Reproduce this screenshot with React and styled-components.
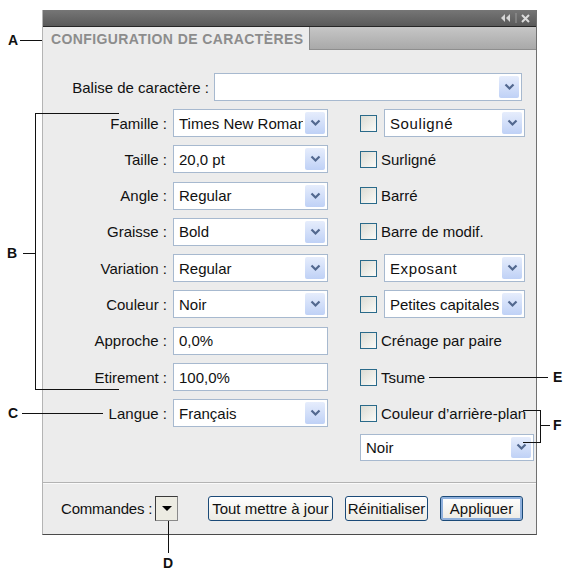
import React from "react";
import styled, { createGlobalStyle } from "styled-components";

const GlobalStyle = createGlobalStyle`
	body {
		margin: 0;
		background: #ffffff;
		font-family: "Liberation Sans", Arial, sans-serif;
	}
`;

const Page = styled.div`
	position: relative;
	width: 564px;
	height: 570px;
	box-sizing: border-box;
	padding: 10px 0 0 42px;
	overflow: hidden;
`;

const Panel = styled.div`
	width: 495px;
	height: 525px;
	box-sizing: border-box;
	display: flex;
	flex-direction: column;
	background: #ececec;
	border-left: 1px solid #b4b4b4;
	border-right: 1px solid #707070;
	border-bottom: 1px solid #4a4a4a;
`;

const TitleBar = styled.div`
	height: 17px;
	box-sizing: border-box;
	display: flex;
	align-items: center;
	justify-content: flex-end;
	padding-right: 4px;
	background: linear-gradient(#767676, #595959);
	border-bottom: 1px solid #262626;
`;

const TabBar = styled.div`
	height: 23px;
	box-sizing: border-box;
	display: flex;
	background: linear-gradient(#c6c6c6, #a9a9a9);
	border-bottom: 1px solid #8e8e8e;
`;

const Tab = styled.div`
	display: flex;
	align-items: center;
	padding: 0 6px 0 8px;
	margin-bottom: -1px;
	background: #ececec;
	border-right: 1px solid #8a8a8a;
	color: #8c8c8c;
	font-size: 14px;
	font-weight: bold;
	letter-spacing: 0.4px;
	white-space: nowrap;
`;

const Body = styled.div`
	flex: 1;
	display: flex;
	flex-direction: column;
	padding: 23px 5px 0 0;
`;

const WideRow = styled.div`
	display: flex;
	align-items: center;
	gap: 5px;
	height: 28px;
	padding-right: 9px;
	margin-bottom: 8px;
`;

const Label = styled.span`
	width: ${(p) => p.$width || 124}px;
	flex: none;
	text-align: right;
	font-size: 15px;
	color: #111;
	white-space: nowrap;
`;

const FieldGrid = styled.div`
	display: grid;
	grid-template-columns: 124px 155px 1fr;
	grid-auto-rows: 28px;
	column-gap: 6px;
	row-gap: 8.3px;
	align-items: center;
`;

const Field = styled.div`
	height: ${(p) => p.$height || 28}px;
	width: ${(p) => (p.$width ? `${p.$width}px` : "auto")};
	flex: ${(p) => (p.$width ? "none" : "1")};
	box-sizing: border-box;
	display: flex;
	align-items: center;
	background: #ffffff;
	border: 1px solid #a7b9cf;
	font-size: 15px;
	color: #111;
	margin-top: ${(p) => p.$shift || 0}px;
`;

const FieldText = styled.span`
	flex: 1;
	padding-left: 5px;
	letter-spacing: ${(p) => (p.$spaced ? "0.6px" : "0")};
	overflow: hidden;
	white-space: nowrap;
`;

const ChevronButton = styled.div`
	width: 20px;
	align-self: stretch;
	margin: 2px;
	border-radius: 2px;
	display: flex;
	align-items: center;
	justify-content: center;
	background: linear-gradient(#e6edfc, #bfd1f6);
`;

const RightCell = styled.div`
	margin-left: 26px;
	display: flex;
	align-items: center;
	gap: ${(p) => (p.$withSelect ? 7 : 4)}px;
	font-size: 15px;
	color: #111;
	white-space: nowrap;
`;

const Checkbox = styled.span`
	width: 17px;
	height: 17px;
	box-sizing: border-box;
	flex: none;
	border: 1px solid #2a6a8a;
	background: linear-gradient(135deg, #dcdcd4, #fbfbf8);
`;

const Footer = styled.div`
	height: 51px;
	display: flex;
	align-items: center;
	padding: 0 13px 0 18px;
	border-top: 1px solid #b3b3b3;
	box-shadow: inset 0 1px 0 #fafafa;
	font-size: 15px;
	letter-spacing: -0.2px;
	color: #111;
`;

const CmdButton = styled.div`
	width: 23px;
	height: 25px;
	box-sizing: border-box;
	margin-left: 3px;
	display: flex;
	align-items: center;
	justify-content: center;
	border: 1px solid #3a3a3a;
	border-right-color: #8a8a8a;
	border-bottom-color: #8a8a8a;
	background: #ecebe2;
`;

const Triangle = styled.span`
	width: 0;
	height: 0;
	border-left: 5px solid transparent;
	border-right: 5px solid transparent;
	border-top: 5px solid #000;
`;

const Buttons = styled.div`
	margin-left: auto;
	display: flex;
	gap: 12px;
`;

const Button = styled.div`
	width: ${(p) => p.$width}px;
	height: 25px;
	box-sizing: border-box;
	display: flex;
	align-items: center;
	justify-content: center;
	border: 1px solid #1b4a78;
	border-radius: 3px;
	background: linear-gradient(#ffffff, #ecebe4);
	box-shadow: ${(p) => (p.$default ? "inset 0 0 0 2px #8fb0dc" : "none")};
	font-size: 15px;
	letter-spacing: 0;
	color: #111;
	white-space: nowrap;
`;

/* callouts drawn over the screenshot */
const Letter = styled.span`
	position: absolute;
	left: ${(p) => p.$x}px;
	top: ${(p) => p.$y - 9}px;
	font-size: 14px;
	font-weight: bold;
	line-height: 18px;
	color: #111;
`;

const Line = styled.span`
	position: absolute;
	left: ${(p) => p.$x}px;
	top: ${(p) => p.$y}px;
	width: ${(p) => p.$w || 1}px;
	height: ${(p) => p.$h || 1}px;
	background: #111;
`;

const Bracket = styled.span`
	position: absolute;
	left: ${(p) => p.$x}px;
	top: ${(p) => p.$y}px;
	width: ${(p) => p.$w}px;
	height: ${(p) => p.$h}px;
	border: 1px solid #111;
	border-${(p) => p.$open}: none;
`;

const Chevron = () => (
	<svg width="11" height="8" viewBox="0 0 11 8">
		<path d="M1.5 1.5 L5.5 5.5 L9.5 1.5" fill="none" stroke="#52688f" strokeWidth="2.2" />
	</svg>
);

const PanelIcons = () => (
	<svg width="32" height="10" viewBox="0 0 32 10">
		<path d="M5 1 L1 5 L5 9 Z M10 1 L6 5 L10 9 Z" fill="#d6d6d6" />
		<path d="M16 0 V10" stroke="#9a9a9a" strokeWidth="1" />
		<path d="M22 2 L29 9 M29 2 L22 9" stroke="#dcdcdc" strokeWidth="2" />
	</svg>
);

const Select = ({ value, width, height, shift, spaced }) => (
	<Field $width={width} $height={height} $shift={shift}>
		<FieldText $spaced={spaced}>{value}</FieldText>
		<ChevronButton>
			<Chevron />
		</ChevronButton>
	</Field>
);

const Input = ({ value }) => (
	<Field>
		<FieldText>{value}</FieldText>
	</Field>
);

const rows = [
	{ label: "Famille :", left: { select: "Times New Roman" }, check: { select: "Souligné" } },
	{ label: "Taille :", left: { select: "20,0 pt" }, check: { text: "Surligné" } },
	{ label: "Angle :", left: { select: "Regular" }, check: { text: "Barré" } },
	{ label: "Graisse :", left: { select: "Bold" }, check: { text: "Barre de modif." } },
	{ label: "Variation :", left: { select: "Regular" }, check: { select: "Exposant" } },
	{ label: "Couleur :", left: { select: "Noir" }, check: { select: "Petites capitales" } },
	{ label: "Approche :", left: { input: "0,0%" }, check: { text: "Crénage par paire" } },
	{ label: "Etirement :", left: { input: "100,0%" }, check: { text: "Tsume" } },
	{ label: "Langue :", left: { select: "Français" }, check: { text: "Couleur d’arrière-plan" } },
];

const App = () => {
	return (
		<Page>
			<GlobalStyle />
			<Panel>
				<TitleBar>
					<PanelIcons />
				</TitleBar>
				<TabBar>
					<Tab>CONFIGURATION DE CARACTÈRES</Tab>
				</TabBar>
				<Body>
					<WideRow>
						<Label $width={166}>Balise de caractère :</Label>
						<Select value="" />
					</WideRow>
					<FieldGrid>
						{rows.map((row) => (
							<React.Fragment key={row.label}>
								<Label>{row.label}</Label>
								{row.left.select !== undefined ? (
									<Select value={row.left.select} />
								) : (
									<Input value={row.left.input} />
								)}
								{row.check.select ? (
									<RightCell $withSelect>
										<Checkbox />
										<Select value={row.check.select} width={141} spaced={row.check.select !== "Petites capitales"} />
									</RightCell>
								) : (
									<RightCell>
										<Checkbox />
										{row.check.text}
									</RightCell>
								)}
							</React.Fragment>
						))}
						<span />
						<span />
						<RightCell>
							<Select value="Noir" width={174} height={27} shift={-5} />
						</RightCell>
					</FieldGrid>
				</Body>
				<Footer>
					Commandes :
					<CmdButton>
						<Triangle />
					</CmdButton>
					<Buttons>
						<Button $width={125}>Tout mettre à jour</Button>
						<Button $width={83}>Réinitialiser</Button>
						<Button $width={83} $default>Appliquer</Button>
					</Buttons>
				</Footer>
			</Panel>

			<Letter $x={8} $y={40}>A</Letter>
			<Line $x={20} $y={40} $w={22} />

			<Letter $x={7} $y={253}>B</Letter>
			<Line $x={23} $y={253} $w={12} />
			<Bracket $x={35} $y={113} $w={83} $h={275} $open="right" />

			<Letter $x={8} $y={413}>C</Letter>
			<Line $x={22} $y={413} $w={81} />

			<Line $x={168} $y={521} $h={32} />
			<Letter $x={163} $y={563}>D</Letter>

			<Line $x={429} $y={377} $w={119} />
			<Letter $x={553} $y={377}>E</Letter>

			<Bracket $x={523} $y={410} $w={17} $h={31} $open="left" />
			<Line $x={541} $y={425} $w={9} />
			<Letter $x={553} $y={425}>F</Letter>
		</Page>
	);
};

export default App;
